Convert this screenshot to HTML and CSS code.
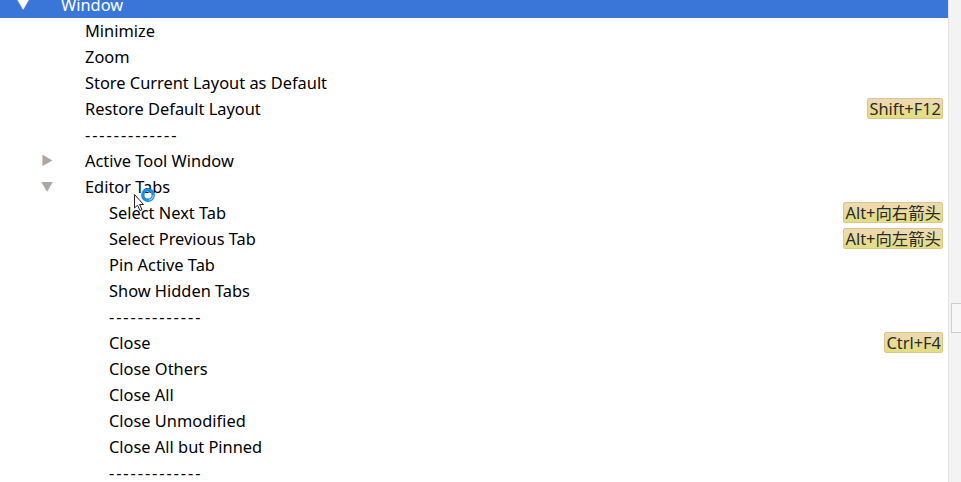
FILE: index.html
```html
<!DOCTYPE html>
<html>
<head>
<meta charset="utf-8">
<link rel="stylesheet" href="styles.css">
</head>
<body>
<div class="frame">
  <div class="tree">
    <div class="row selected lvl0"><span class="tog white">&#9660;</span><span class="label">Window</span></div>
    <div class="row lvl1"><span class="tog"></span><span class="label">Minimize</span></div>
    <div class="row lvl1"><span class="tog"></span><span class="label">Zoom</span></div>
    <div class="row lvl1"><span class="tog"></span><span class="label">Store Current Layout as Default</span></div>
    <div class="row lvl1"><span class="tog"></span><span class="label">Restore Default Layout</span><span class="key">Shift+F12</span></div>
    <div class="row lvl1"><span class="tog"></span><span class="label dash">-------------</span></div>
    <div class="row lvl1"><span class="tog">&#9654;</span><span class="label">Active Tool Window</span></div>
    <div class="row lvl1"><span class="tog">&#9660;</span><span class="label">Editor Tabs</span></div>
    <div class="row lvl2"><span class="tog"></span><span class="label">Select Next Tab</span><span class="key">Alt+向右箭头</span></div>
    <div class="row lvl2"><span class="tog"></span><span class="label">Select Previous Tab</span><span class="key">Alt+向左箭头</span></div>
    <div class="row lvl2"><span class="tog"></span><span class="label">Pin Active Tab</span></div>
    <div class="row lvl2"><span class="tog"></span><span class="label">Show Hidden Tabs</span></div>
    <div class="row lvl2"><span class="tog"></span><span class="label dash">-------------</span></div>
    <div class="row lvl2"><span class="tog"></span><span class="label">Close</span><span class="key">Ctrl+F4</span></div>
    <div class="row lvl2"><span class="tog"></span><span class="label">Close Others</span></div>
    <div class="row lvl2"><span class="tog"></span><span class="label">Close All</span></div>
    <div class="row lvl2"><span class="tog"></span><span class="label">Close Unmodified</span></div>
    <div class="row lvl2"><span class="tog"></span><span class="label">Close All but Pinned</span></div>
    <div class="row lvl2"><span class="tog"></span><span class="label dash">-------------</span></div>
  </div>
  <div class="scrollbar"><div class="thumb"></div></div>
</div>
<svg class="cursor" width="26" height="28" viewBox="0 0 26 28">
  <path d="M1.5 8.5 L1.5 22 L4.5 19.2 L7 24.5 L9 23.6 L6.6 18.5 L10.5 18.5 Z" fill="#fff" stroke="#222" stroke-width="1" stroke-linejoin="round"/>
  <circle cx="15" cy="9" r="5.2" fill="none" stroke="#1c8ce8" stroke-width="3.4"/>
  <circle cx="15" cy="9" r="5.2" fill="none" stroke="#9ad0fa" stroke-width="1.2" stroke-dasharray="7 26"/>
</svg>
</body>
</html>
```

FILE: styles.css
```css
html, body {
  margin: 0;
  padding: 0;
  background: #fff;
  overflow: hidden;
}
body {
  width: 961px;
  height: 482px;
  position: relative;
  font-family: "Noto Sans", "Noto Sans CJK SC", sans-serif;
  font-size: 16.4px;
  color: #000;
}
.frame {
  display: flex;
  height: 482px;
  overflow: hidden;
}
.tree {
  flex: 1;
  margin-top: -8px;
}
.row {
  box-sizing: border-box;
  height: 26px;
  padding-bottom: 2px;
  display: flex;
  align-items: center;
  padding-right: 5px;
  white-space: nowrap;
}
.row.lvl0 { padding-left: 16px; }
.row.lvl1 { padding-left: 40px; }
.row.lvl2 { padding-left: 64px; }
.row.selected {
  background: #3a76d8;
  color: #fff;
}
.tog {
  width: 44px;
  padding-left: 1px;
  flex: none;
  font-size: 12px;
  color: #a8a8a8;
  line-height: 24px;
  padding-top: 2px;
}
.tog.white { color: #fff; }
.label {
  flex: 1;
}
.label.dash {
  letter-spacing: 1.9px;
}
.key {
  height: 19px;
  line-height: 19px;
  padding: 0 1px 0 1px;
  border: 1px solid #d8c98a;
  border-radius: 2px;
  background: linear-gradient(#efd8b6, #e2de80);
  color: #2a2a2a;
  font-size: 16.4px;
}
.scrollbar {
  width: 12px;
  flex: none;
  background: #f3f3f3;
  border-left: 1px solid #e2e2e2;
  position: relative;
}
.thumb {
  position: absolute;
  left: 2px;
  right: 0;
  top: 303px;
  height: 28px;
  background: #f7f7f7;
  border: 1px solid #cfcfcf;
  border-right: none;
}
.cursor {
  position: absolute;
  left: 133px;
  top: 186px;
}
```
